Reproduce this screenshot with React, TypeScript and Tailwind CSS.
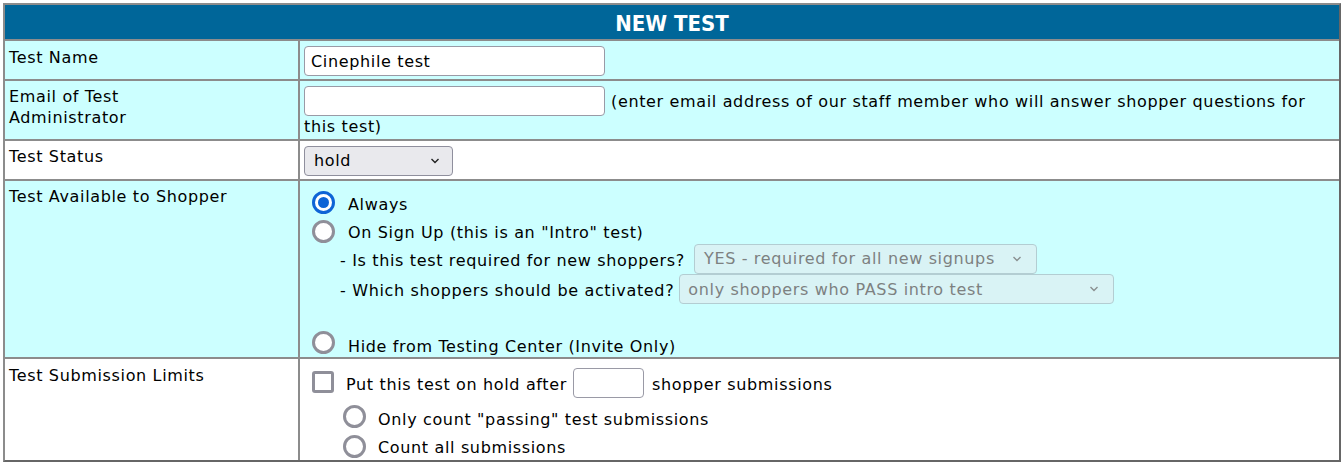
import React from "react";

function Chevron({ color }: { color: string }) {
  return (
    <svg width="10" height="6" viewBox="0 0 10 6" fill="none">
      <path d="M1.5 1 L5 4.5 L8.5 1" stroke={color} strokeWidth="1.4" />
    </svg>
  );
}

function Radio({ checked, className }: { checked?: boolean; className: string }) {
  if (checked) {
    return (
      <span className={"shrink-0 w-[23px] h-[23px] rounded-full border-[3px] border-[#0e64d6] bg-white flex items-center justify-center " + className}>
        <span className="w-[11px] h-[11px] rounded-full bg-[#0e64d6]" />
      </span>
    );
  }
  return <span className={"shrink-0 w-[23px] h-[23px] rounded-full border-[3px] border-[#8f8f99] bg-white " + className} />;
}

function Row({
  label,
  rowClass,
  labelClass,
  children,
}: {
  label: React.ReactNode;
  rowClass: string;
  labelClass: string;
  children: React.ReactNode;
}) {
  return (
    <div className={"flex border-t-2 border-[#8c8c8c] " + rowClass}>
      <div className={"w-[295px] shrink-0 border-r-2 border-[#8c8c8c] pl-[4px] leading-[21px] " + labelClass}>
        {label}
      </div>
      <div className="flex-1 min-w-0">{children}</div>
    </div>
  );
}

export default function App() {
  return (
    <div className="font-['DejaVu_Sans',Verdana,sans-serif] text-[16px] tracking-[0.65px] text-black bg-white w-[1343px] h-[464px] pt-[3px] pl-[3px]">
      <div className="w-[1338px] border-2 border-[#8c8c8c] border-r-[#666666] border-b-[#666666]">
        <div className="h-[34px] bg-[#006699] flex items-center justify-center pt-[3px]">
          <span className="font-['DejaVu_Sans_Condensed','Liberation_Sans',sans-serif] font-bold text-[22px] tracking-normal text-white leading-none">
            NEW TEST
          </span>
        </div>

        <Row label="Test Name" rowClass="h-[40px] bg-[#ccffff]" labelClass="pt-[6px]">
          <div className="pt-[5px] pl-[4px]">
            <div className="w-[301px] h-[30px] bg-white border border-[#9a9aa6] rounded-[4px] px-[6px] pt-[1px] flex items-center">
              Cinephile test
            </div>
          </div>
        </Row>

        <Row
          label={
            <>
              Email of Test
              <br />
              Administrator
            </>
          }
          rowClass="h-[60px] bg-[#ccffff]"
          labelClass="pt-[5px]"
        >
          <div className="pt-[5px] pl-[4px] pr-[2px] leading-[21px]">
            <input
              readOnly
              className="inline-block align-baseline w-[301px] h-[30px] bg-white border border-[#9a9aa6] rounded-[4px] px-[6px] outline-none"
            />
            <span className="ml-[6px]">
              (enter email address of our staff member who will answer shopper questions for this test)
            </span>
          </div>
        </Row>

        <Row label="Test Status" rowClass="h-[40px] bg-white" labelClass="pt-[5px]">
          <div className="pt-[5px] pl-[4px]">
            <div className="w-[149px] h-[30px] bg-[#e9e9ed] border border-[#8f8f9d] rounded-[4px] pl-[9px] pr-[12px] flex items-center justify-between">
              <span>hold</span>
              <Chevron color="#222" />
            </div>
          </div>
        </Row>

        <Row label="Test Available to Shopper" rowClass="h-[178px] bg-[#ccffff]" labelClass="pt-[5px]">
          <div className="pt-[8px] pl-[12px] flex flex-col leading-[21px]">
            <div className="h-[30px] flex items-center">
              <Radio checked className="mb-[4px]" />
              <span className="ml-[13px]">Always</span>
            </div>
            <div className="h-[26px] flex items-center">
              <Radio className="mb-[2px]" />
              <span className="ml-[13px]">On Sign Up (this is an "Intro" test)</span>
            </div>
            <div className="h-[30px] flex items-center pl-[28px]">
              <span>- Is this test required for new shoppers?</span>
              <div className="ml-[9px] mb-[3px] w-[343px] h-[30px] bg-[#d9f3f5] border border-[#b3cdd2] rounded-[4px] pl-[9px] pr-[14px] flex items-center justify-between text-[#7d8181]">
                <span>YES - required for all new signups</span>
                <Chevron color="#8a8f90" />
              </div>
            </div>
            <div className="h-[30px] flex items-center pl-[28px]">
              <span>- Which shoppers should be activated?</span>
              <div className="ml-[5px] mb-[2px] w-[435px] h-[30px] bg-[#d9f3f5] border border-[#b3cdd2] rounded-[4px] pl-[8px] pr-[14px] flex items-center justify-between text-[#7d8181]">
                <span>only shoppers who PASS intro test</span>
                <Chevron color="#8a8f90" />
              </div>
            </div>
            <div className="h-[24px]" />
            <div className="h-[27px] flex items-center">
              <Radio />
              <span className="ml-[13px] pt-[7px]">Hide from Testing Center (Invite Only)</span>
            </div>
          </div>
        </Row>

        <Row label="Test Submission Limits" rowClass="h-[103px] bg-white" labelClass="pt-[6px]">
          <div className="pt-[10px] pl-[12px] flex flex-col leading-[21px]">
            <div className="h-[30px] flex items-center">
              <span className="shrink-0 w-[22px] h-[22px] rounded-[3px] border-[3px] border-[#8f8f99] bg-white mb-[5px]" />
              <span className="ml-[12px]">Put this test on hold after</span>
              <span className="ml-[6px] mb-[2px] w-[71px] h-[30px] bg-white border border-[#9a9aa6] rounded-[4px]" />
              <span className="ml-[8px]">shopper submissions</span>
            </div>
            <div className="mt-[5px] h-[30px] flex items-center pl-[31px]">
              <Radio className="mb-[6px]" />
              <span className="ml-[12px]">Only count "passing" test submissions</span>
            </div>
            <div className="h-[27px] flex items-center pl-[31px]">
              <Radio className="mb-[2px]" />
              <span className="ml-[12px]">Count all submissions</span>
            </div>
          </div>
        </Row>
      </div>
    </div>
  );
}
